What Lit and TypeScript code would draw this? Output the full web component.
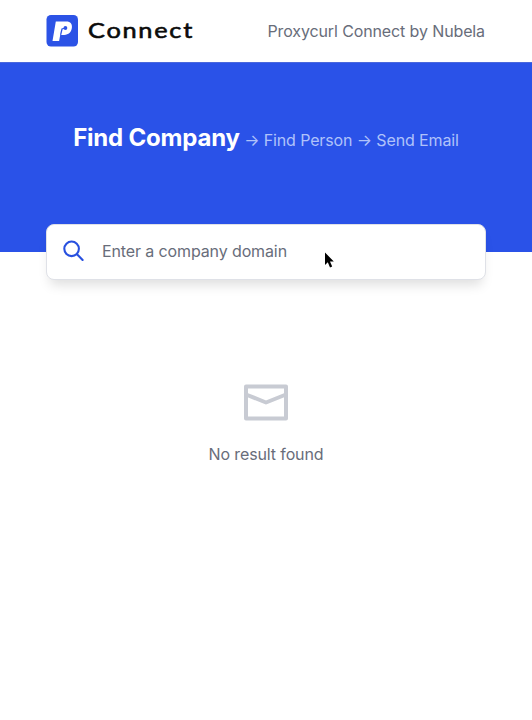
import { LitElement, html, css } from "lit";
import { customElement } from "lit/decorators.js";

@customElement("app-root")
export class AppRoot extends LitElement {
  static styles = css`
    :host {
      display: block;
      height: 720px;
      overflow: hidden;
      background: #fff;
      color: #686d7a;
      font: 400 16px/24px Inter, sans-serif;
      letter-spacing: -0.12px;
    }
    svg { display: block; }
    header {
      box-sizing: border-box;
      height: 62px;
      padding: 0 47px 0 46px;
      display: flex;
      align-items: center;
      justify-content: space-between;
    }
    .logo { color: #0b0b0b; }
    .word {
      font: 400 20.5px Lato, sans-serif;
      letter-spacing: 1.4px;
      stroke: currentColor;
      stroke-width: 0.55px;
    }
    .hero {
      box-sizing: border-box;
      height: 190px;
      padding-top: 60px;
      background: #2a52e8;
      border-top: 1px solid #4a68dd;
    }
    .steps {
      display: flex;
      align-items: baseline;
      justify-content: center;
      white-space: pre;
      line-height: 30px;
      color: #b0c2fa;
    }
    .steps strong {
      font-size: 24px;
      font-weight: 700;
      letter-spacing: -0.2px;
      color: #fff;
    }
    .search {
      position: relative;
      box-sizing: border-box;
      height: 56px;
      margin: -28px 46px 0;
      padding: 0 0 2px 16px;
      display: flex;
      align-items: center;
      gap: 17px;
      background: #fff;
      border: 1px solid #dfe1e7;
      border-radius: 8px;
      box-shadow: 0 9px 12px -4px rgba(0, 0, 0, 0.13);
    }
    .cursor { position: absolute; left: 276px; top: 26px; }
    .empty {
      margin-top: 104px;
      display: flex;
      flex-direction: column;
      align-items: center;
      gap: 21px;
    }
  `;

  render() {
    return html`
      <header>
        <svg class="logo" width="150" height="34" viewBox="0 0 150 34">
          <rect x="0.5" y="1" width="31.5" height="31.5" rx="4.5" fill="#2c53e6" />
          <path
            d="M9.8 7.5H20.3C24.6 7.5 26.4 10 25.9 13.8C25.3 18.1 22.6 20.9 18.2 20.9H14.2L13.1 27H6.5Z"
            fill="#fff"
          />
          <circle cx="19.4" cy="14" r="1.9" fill="#2c53e6" />
          <path d="M19.2 14L16 15L14.6 20.9" fill="none" stroke="#2c53e6" stroke-width="1.3" />
          <text class="word" x="42" y="23.8" textLength="106" lengthAdjust="spacingAndGlyphs" fill="currentColor">Connect</text>
        </svg>
        <span>Proxycurl Connect by Nubela</span>
      </header>
      <section class="hero">
        <div class="steps"><strong>Find Company</strong><span> → Find Person → Send Email</span></div>
      </section>
      <div class="search">
        <svg width="22" height="22" viewBox="0 0 22 22" fill="none" stroke="#2850df" stroke-width="2.1" stroke-linecap="round">
          <circle cx="8.6" cy="8.8" r="7.3" />
          <path d="M14 14.2L19.6 20" />
        </svg>
        <span>Enter a company domain</span>
        <svg class="cursor" width="15" height="19" viewBox="0 0 15 19">
          <path d="M2 1.5V13.9L4.8 11.3L7 16.4L9.2 15.4L7 10.5H10.8Z" fill="#000" stroke="#fff" stroke-width="1.6" paint-order="stroke" />
        </svg>
      </div>
      <section class="empty">
        <svg width="44" height="37" viewBox="0 0 44 37" fill="none" stroke="#c8cbd3" stroke-width="4" stroke-linejoin="round">
          <rect x="2" y="2.5" width="40" height="32" />
          <path d="M2 10.5L22 18.5L42 10.5" />
        </svg>
        <span>No result found</span>
      </section>
    `;
  }
}
